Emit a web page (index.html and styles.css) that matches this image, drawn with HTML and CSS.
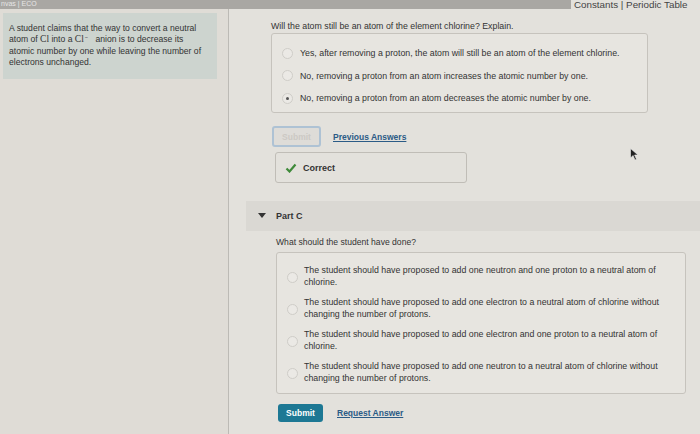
FILE: index.html
```html
<!DOCTYPE html>
<html lang="en">
<head>
  <meta charset="UTF-8">
  <title>Part C - Chlorine ion</title>
  <link rel="stylesheet" href="styles.css">
</head>
<body>

  <div class="topbar">
    <div class="tabs">nvas | ECO</div>
    <div class="links">Constants | Periodic Table</div>
  </div>

  <div class="page">
    <aside class="sidebar">
      <div class="intro">
        A student claims that the way to convert a neutral atom of <span class="chem">Cl</span> into a <span class="chem">Cl<sup>&minus;</sup></span> anion is to decrease its atomic number by one while leaving the number of electrons unchanged.
      </div>
    </aside>

    <main class="content">
      <section class="part part-b">
        <p class="question">Will the atom still be an atom of the element chlorine? Explain.</p>
        <div class="choices">
          <label class="choice"><span class="radio"></span>Yes, after removing a proton, the atom will still be an atom of the element chlorine.</label>
          <label class="choice"><span class="radio"></span>No, removing a proton from an atom increases the atomic number by one.</label>
          <label class="choice"><span class="radio checked"></span>No, removing a proton from an atom decreases the atomic number by one.</label>
        </div>
        <div class="actions">
          <button class="btn disabled" type="button">Submit</button>
          <a class="link" href="#">Previous Answers</a>
        </div>
        <div class="feedback">
          <svg width="12" height="10" viewBox="0 0 12 10"><polyline points="1.5,5.5 4.5,8.5 10.5,1.5" fill="none" stroke="#3f8a3a" stroke-width="2.2"/></svg>
          <span>Correct</span>
        </div>
      </section>

      <div class="part-header">
        <svg width="8" height="6" viewBox="0 0 8 6"><polygon points="0,0 8,0 4,5" fill="#333"/></svg>
        <span>Part C</span>
      </div>

      <section class="part part-c">
        <p class="question">What should the student have done?</p>
        <div class="choices wide">
          <label class="choice"><span class="radio"></span>The student should have proposed to add one neutron and one proton to a neutral atom of chlorine.</label>
          <label class="choice"><span class="radio"></span>The student should have proposed to add one electron to a neutral atom of chlorine without changing the number of protons.</label>
          <label class="choice"><span class="radio"></span>The student should have proposed to add one electron and one proton to a neutral atom of chlorine.</label>
          <label class="choice"><span class="radio"></span>The student should have proposed to add one neutron to a neutral atom of chlorine without changing the number of protons.</label>
        </div>
        <div class="actions">
          <button class="btn primary" type="button">Submit</button>
          <a class="link" href="#">Request Answer</a>
        </div>
      </section>

      <svg class="cursor" width="9" height="13" viewBox="0 0 9 13"><polygon points="0.5,0.5 0.5,10 3,7.5 5,12 6.5,11.3 4.6,7 8,7" fill="#222" stroke="#eee" stroke-width="0.6"/></svg>
    </main>
  </div>

</body>
</html>
```

FILE: styles.css
```css
body {
  margin: 0;
  font-family: "Liberation Sans", Arial, sans-serif;
  background: #e3e1dc;
  color: #2b2b2b;
  width: 700px;
  height: 434px;
  overflow: hidden;
}

.topbar { display: flex; height: 9px; }
.tabs { flex: 1; background: #a9a7a3; color: #e6e6e6; font-size: 7px; line-height: 7px; padding-left: 1px; overflow: hidden; }
.links { width: 126px; font-size: 9.8px; line-height: 10px; color: #444; padding-left: 3px; white-space: nowrap; }

.page { display: flex; height: 425px; }

.sidebar { width: 229px; border-right: 1px solid #bcbab5; background: #dfdcd6; padding-top: 4px; box-sizing: border-box; flex-shrink: 0; }
.intro { margin: 0 11px 0 3px; background: #cdd4cf; padding: 10px 8px 10px 6px; font-size: 8.6px; line-height: 11.4px; color: #333; }
.chem { font-family: "Liberation Serif", serif; font-size: 9.5px; line-height: 9px; }
.chem sup { font-family: "Liberation Sans", sans-serif; font-size: 5.5px; line-height: 0; vertical-align: 3px; margin-left: 1px; margin-right: 5px; }

.content { flex: 1; position: relative; }

.part-b { padding: 12px 0 0 42px; }
.question { margin: 0; font-size: 8.8px; line-height: 11px; color: #333; }
.choices { margin-top: 1px; width: 365px; border: 1px solid #c6c3bd; border-radius: 3px; background: #e7e5e0; padding: 13px 0 8px 10px; display: flex; flex-direction: column; gap: 10.5px; }
.choice { display: flex; align-items: center; gap: 7px; font-size: 8.8px; line-height: 12px; color: #333; }
.radio { width: 9px; height: 9px; border: 1px solid #cfcdc8; border-radius: 50%; background: #ebe9e5; flex-shrink: 0; position: relative; }
.radio.checked::after { content: ""; position: absolute; left: 3px; top: 3px; width: 3px; height: 3px; border-radius: 50%; background: #555; }

.actions { display: flex; align-items: center; gap: 12px; margin-top: 13px; }
.btn { font-family: inherit; font-size: 8.5px; font-weight: bold; border-radius: 3px; padding: 0; }
.btn.disabled { margin-left: 1px; width: 49px; height: 21px; border: 2px solid #aec2d4; background: #dedcd8; color: #ccc9c4; }
.btn.primary { margin-left: 2px; width: 45px; height: 18px; border: none; background: #1d7894; color: #fff; }
.link { font-size: 8.5px; font-weight: bold; color: #2b5b86; }

.feedback { margin: 5px 0 0 4px; width: 181px; height: 29px; border: 1px solid #c0bdb7; border-radius: 3px; display: flex; align-items: center; gap: 6px; padding-left: 9px; font-size: 9px; font-weight: bold; color: #333; }

.part-header { margin: 18px 0 0 17px; height: 30px; background: #dad8d3; display: flex; align-items: center; gap: 10px; padding-left: 12px; font-size: 9px; font-weight: bold; color: #333; }

.part-c { padding: 6px 0 0 47px; }
.part-c .question { font-size: 8.6px; }
.choices.wide { width: 398px; margin-top: 4px; padding: 11px 0 9px 10px; gap: 8px; }
.choices.wide .choice { font-size: 8.8px; line-height: 12px; gap: 6px; align-items: flex-start; padding-right: 18px; }
.choices.wide .radio { margin-top: 8px; }
.part-c .actions { margin-top: 10px; gap: 14px; }

.cursor { position: absolute; left: 401px; top: 139px; }
```
